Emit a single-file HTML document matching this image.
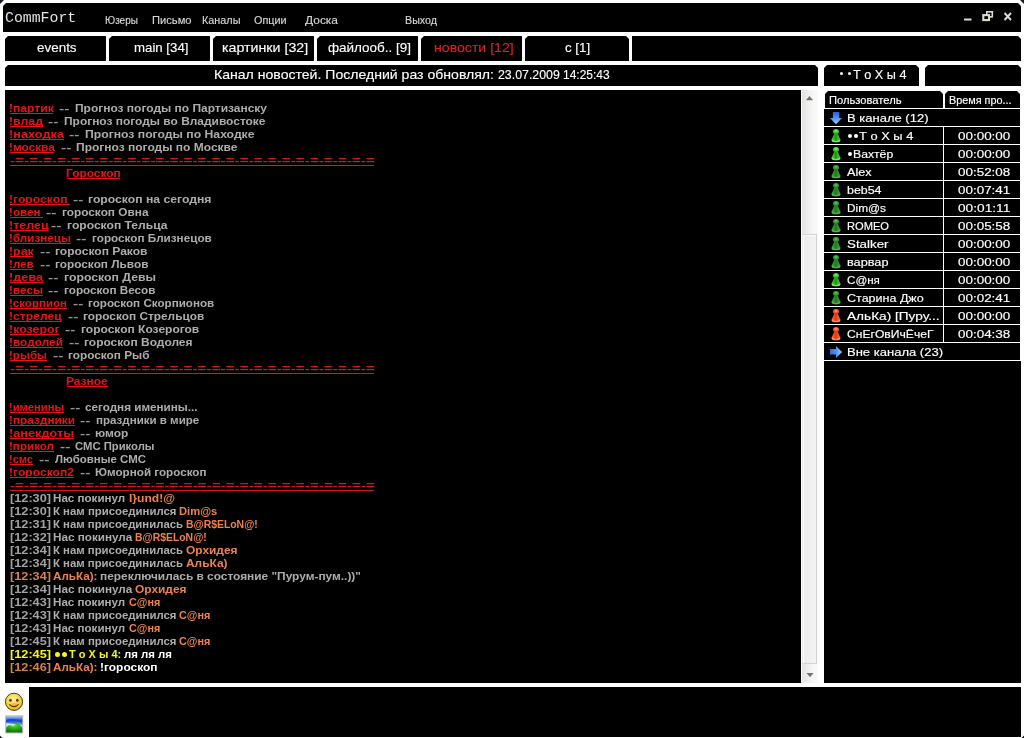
<!DOCTYPE html><html><head><meta charset="utf-8"><title>CommFort</title><style>

html,body{margin:0;padding:0;background:#fff;}
body{width:1024px;height:738px;position:relative;overflow:hidden;font-family:'Liberation Sans',sans-serif;}
.p{position:absolute;background:#000;}
.t{position:absolute;white-space:pre;transform-origin:0 0;line-height:13px;height:13px;}
.c{font-size:11px;font-weight:bold;}
.title{font-family:'Liberation Mono',monospace;font-size:14.5px;line-height:16px;height:16px;}
.menu{font-size:10px;-webkit-text-stroke:0.12px currentColor;}
.tab{position:absolute;top:36px;height:25px;background:#000;color:#fff;font-size:13px;line-height:23px;text-align:center;white-space:pre;padding-left:3px;box-sizing:border-box;}
.u{position:absolute;height:1px;}
.hl{position:absolute;background:#fff;height:1px;left:824px;width:196px;}
.ul{font-size:11px;-webkit-text-stroke:0.15px currentColor;}
.t13{font-size:13px;-webkit-text-stroke:0.12px currentColor;}
svg{position:absolute;overflow:visible;}

</style></head><body>
<svg width="1024" height="738" style="left:0;top:0"><polygon points="0,0 4,0 0,4" fill="#181828"/><polygon points="1020,0 1024,0 1024,4" fill="#181828"/><polygon points="0,735.5 0,738 2.5,738" fill="#181818"/><polygon points="1024,735.5 1024,738 1021.5,738" fill="#181818"/></svg>
<div class="p" style="left:3px;top:3px;width:1018px;height:29px;clip-path:polygon(3px 0,calc(100% - 3px) 0,100% 3px,100% 100%,0 100%,0 3px)"></div>
<div class="tab" style="left:5px;width:101px;color:#ffffff;clip-path:polygon(3px 0,100% 0,100% 100%,0 100%,0 3px)"></div>
<div class="tab" style="left:109px;width:101px;color:#ffffff;clip-path:polygon(3px 0,100% 0,100% 100%,0 100%,0 3px)"></div>
<div class="tab" style="left:213px;width:101px;color:#ffffff;clip-path:polygon(3px 0,100% 0,100% 100%,0 100%,0 3px)"></div>
<div class="tab" style="left:317px;width:101px;color:#ffffff;clip-path:polygon(3px 0,100% 0,100% 100%,0 100%,0 3px)"></div>
<div class="tab" style="left:421px;width:101px;color:#e02020;clip-path:polygon(3px 0,100% 0,100% 100%,0 100%,0 3px)"></div>
<div class="tab" style="left:525px;width:104px;color:#ffffff;clip-path:polygon(3px 0,calc(100% - 3px) 0,100% 3px,100% 100%,0 100%,0 3px)"></div>
<div class="p" style="left:632px;top:36px;width:389px;height:25px;clip-path:polygon(0 0,calc(100% - 3px) 0,100% 3px,100% 100%,0 100%)"></div>
<div class="p" style="left:5px;top:65px;width:813px;height:21px;clip-path:polygon(3px 0,calc(100% - 3px) 0,100% 3px,100% 100%,0 100%,0 3px)"></div>
<div class="p" style="left:824px;top:65px;width:95px;height:21px;clip-path:polygon(3px 0,calc(100% - 3px) 0,100% 3px,100% 100%,0 100%,0 3px)"></div>
<div class="p" style="left:925px;top:65px;width:96px;height:21px;clip-path:polygon(3px 0,calc(100% - 3px) 0,100% 3px,100% 100%,0 100%,0 3px)"></div>
<div class="p" style="left:5px;top:90px;width:796px;height:593px"></div>
<div style="position:absolute;left:802px;top:90px;width:16px;height:593px;background:linear-gradient(90deg,#e3e3e3,#f4f4f4 60%,#fbfbfb)"></div>
<div style="position:absolute;left:802px;top:234px;width:13px;height:428px;background:linear-gradient(90deg,#ececec,#f3f3f3);border:1px solid #d2d2d2;border-left-color:#e8e8e8;box-shadow:inset 1px 1px 0 #fbfbfb"></div>
<svg width="16" height="593" style="left:802px;top:90px"><polygon points="4,10.2 11,10.2 7.5,6" fill="#72725f"/><polygon points="4.5,583 11.5,583 8,587.2" fill="#72725f"/></svg>
<div class="p" style="left:824px;top:109px;width:197px;height:574px"></div>
<div class="p" style="left:825px;top:91px;width:118px;height:17px;clip-path:polygon(3px 0,calc(100% - 3px) 0,100% 3px,100% 100%,0 100%,0 3px)"></div>
<div class="p" style="left:945px;top:91px;width:75px;height:17px;clip-path:polygon(3px 0,calc(100% - 3px) 0,100% 3px,100% 100%,0 100%,0 3px)"></div>
<div style="position:absolute;left:1020px;top:109px;width:1px;height:252px;background:#fff"></div>
<div class="hl" style="top:108px"></div>
<div class="hl" style="top:126px"></div>
<div class="hl" style="top:144px"></div>
<div class="hl" style="top:162px"></div>
<div class="hl" style="top:180px"></div>
<div class="hl" style="top:198px"></div>
<div class="hl" style="top:216px"></div>
<div class="hl" style="top:234px"></div>
<div class="hl" style="top:252px"></div>
<div class="hl" style="top:270px"></div>
<div class="hl" style="top:288px"></div>
<div class="hl" style="top:306px"></div>
<div class="hl" style="top:324px"></div>
<div class="hl" style="top:342px"></div>
<div class="hl" style="top:360px"></div>
<div style="position:absolute;left:943px;top:127px;width:1px;height:216px;background:#fff"></div>
<div class="p" style="left:29px;top:687px;width:992px;height:50px"></div>
<div id="txt" style="position:absolute;left:0;top:0;width:1024px;height:738px;will-change:transform">
<div class="t c" style="left:9.00px;top:102px;color:#e81414;transform:scaleX(1.1007)">!партик</div>
<div class="u" style="left:9.5px;top:113px;width:43.75px;background:#e81414"></div>
<div class="t c" style="left:59.00px;top:102px;color:#969696;transform:scaleX(1.4055)">--</div>
<div class="t c" style="left:75.25px;top:102px;color:#adadad;transform:scaleX(1.0880)">Прогноз погоды по Партизанску</div>
<div class="t c" style="left:9.00px;top:115px;color:#e81414;transform:scaleX(1.1193)">!влад</div>
<div class="u" style="left:9.5px;top:126px;width:33.0px;background:#e81414"></div>
<div class="t c" style="left:48.25px;top:115px;color:#969696;transform:scaleX(1.4055)">--</div>
<div class="t c" style="left:64.00px;top:115px;color:#adadad;transform:scaleX(1.0859)">Прогноз погоды во Владивостоке</div>
<div class="t c" style="left:9.00px;top:128px;color:#e81414;transform:scaleX(1.1590)">!находка</div>
<div class="u" style="left:9.5px;top:139px;width:54.0px;background:#e81414"></div>
<div class="t c" style="left:69.00px;top:128px;color:#969696;transform:scaleX(1.4055)">--</div>
<div class="t c" style="left:85.25px;top:128px;color:#adadad;transform:scaleX(1.1080)">Прогноз погоды по Находке</div>
<div class="t c" style="left:9.00px;top:141px;color:#e81414;transform:scaleX(1.0741)">!москва</div>
<div class="u" style="left:9.5px;top:152px;width:44.75px;background:#e81414"></div>
<div class="t c" style="left:60.75px;top:141px;color:#969696;transform:scaleX(1.4055)">--</div>
<div class="t c" style="left:76.00px;top:141px;color:#adadad;transform:scaleX(1.0912)">Прогноз погоды по Москве</div>
<div class="t c" style="left:9.50px;top:154px;color:#d01a1a;transform:scaleX(1.3917)">-=-=-=-=-=-=-=-=-=-=-=-=-=-=-=-=-=-=-=-=-=-=-=-=-=-=</div>
<div class="u" style="left:10px;top:165px;width:364px;background:#d01a1a"></div>
<div class="t c" style="left:66.00px;top:167px;color:#e81414;transform:scaleX(1.0832)">Гороскоп</div>
<div class="u" style="left:66.5px;top:178px;width:53.75px;background:#e81414"></div>
<div class="t c" style="left:9.00px;top:193px;color:#e81414;transform:scaleX(1.1044)">!гороскоп</div>
<div class="u" style="left:9.5px;top:204px;width:60.25px;background:#e81414"></div>
<div class="t c" style="left:72.75px;top:193px;color:#969696;transform:scaleX(1.4055)">--</div>
<div class="t c" style="left:88.25px;top:193px;color:#adadad;transform:scaleX(1.1079)">гороскоп на сегодня</div>
<div class="t c" style="left:9.00px;top:206px;color:#e81414;transform:scaleX(1.0583)">!овен</div>
<div class="u" style="left:9.5px;top:217px;width:33.5px;background:#e81414"></div>
<div class="t c" style="left:46.25px;top:206px;color:#969696;transform:scaleX(1.4055)">--</div>
<div class="t c" style="left:62.00px;top:206px;color:#adadad;transform:scaleX(1.0754)">гороскоп Овна</div>
<div class="t c" style="left:9.00px;top:219px;color:#e81414;transform:scaleX(1.1393)">!телец</div>
<div class="u" style="left:9.5px;top:230px;width:38.75px;background:#e81414"></div>
<div class="t c" style="left:50.75px;top:219px;color:#969696;transform:scaleX(1.4055)">--</div>
<div class="t c" style="left:67.00px;top:219px;color:#adadad;transform:scaleX(1.0995)">гороскоп Тельца</div>
<div class="t c" style="left:9.00px;top:232px;color:#e81414;transform:scaleX(1.0630)">!близнецы</div>
<div class="u" style="left:9.5px;top:243px;width:61.0px;background:#e81414"></div>
<div class="t c" style="left:76.25px;top:232px;color:#969696;transform:scaleX(1.4055)">--</div>
<div class="t c" style="left:92.00px;top:232px;color:#adadad;transform:scaleX(1.0646)">гороскоп Близнецов</div>
<div class="t c" style="left:9.00px;top:245px;color:#e81414;transform:scaleX(1.1242)">!рак</div>
<div class="u" style="left:9.5px;top:256px;width:23.75px;background:#e81414"></div>
<div class="t c" style="left:39.50px;top:245px;color:#969696;transform:scaleX(1.4055)">--</div>
<div class="t c" style="left:55.00px;top:245px;color:#adadad;transform:scaleX(1.0947)">гороскоп Раков</div>
<div class="t c" style="left:9.00px;top:258px;color:#e81414;transform:scaleX(1.0581)">!лев</div>
<div class="u" style="left:9.5px;top:269px;width:23.75px;background:#e81414"></div>
<div class="t c" style="left:39.50px;top:258px;color:#969696;transform:scaleX(1.4055)">--</div>
<div class="t c" style="left:55.00px;top:258px;color:#adadad;transform:scaleX(1.0755)">гороскоп Львов</div>
<div class="t c" style="left:9.00px;top:271px;color:#e81414;transform:scaleX(1.1525)">!дева</div>
<div class="u" style="left:9.5px;top:282px;width:33.0px;background:#e81414"></div>
<div class="t c" style="left:48.25px;top:271px;color:#969696;transform:scaleX(1.4055)">--</div>
<div class="t c" style="left:64.00px;top:271px;color:#adadad;transform:scaleX(1.1139)">гороскоп Девы</div>
<div class="t c" style="left:9.00px;top:284px;color:#e81414;transform:scaleX(1.0703)">!весы</div>
<div class="u" style="left:9.5px;top:295px;width:33.0px;background:#e81414"></div>
<div class="t c" style="left:48.25px;top:284px;color:#969696;transform:scaleX(1.4055)">--</div>
<div class="t c" style="left:64.00px;top:284px;color:#adadad;transform:scaleX(1.0655)">гороскоп Весов</div>
<div class="t c" style="left:9.00px;top:297px;color:#e81414;transform:scaleX(1.0477)">!скорпион</div>
<div class="u" style="left:9.5px;top:308px;width:57.0px;background:#e81414"></div>
<div class="t c" style="left:72.50px;top:297px;color:#969696;transform:scaleX(1.4055)">--</div>
<div class="t c" style="left:88.25px;top:297px;color:#adadad;transform:scaleX(1.0579)">гороскоп Скорпионов</div>
<div class="t c" style="left:9.00px;top:310px;color:#e81414;transform:scaleX(1.1051)">!стрелец</div>
<div class="u" style="left:9.5px;top:321px;width:51.75px;background:#e81414"></div>
<div class="t c" style="left:67.50px;top:310px;color:#969696;transform:scaleX(1.4055)">--</div>
<div class="t c" style="left:83.25px;top:310px;color:#adadad;transform:scaleX(1.0776)">гороскоп Стрельцов</div>
<div class="t c" style="left:9.00px;top:323px;color:#e81414;transform:scaleX(1.1262)">!козерог</div>
<div class="u" style="left:9.5px;top:334px;width:49.75px;background:#e81414"></div>
<div class="t c" style="left:65.25px;top:323px;color:#969696;transform:scaleX(1.4055)">--</div>
<div class="t c" style="left:81.25px;top:323px;color:#adadad;transform:scaleX(1.0905)">гороскоп Козерогов</div>
<div class="t c" style="left:9.00px;top:336px;color:#e81414;transform:scaleX(1.0797)">!водолей</div>
<div class="u" style="left:9.5px;top:347px;width:53.0px;background:#e81414"></div>
<div class="t c" style="left:68.50px;top:336px;color:#969696;transform:scaleX(1.4055)">--</div>
<div class="t c" style="left:84.25px;top:336px;color:#adadad;transform:scaleX(1.0886)">гороскоп Водолея</div>
<div class="t c" style="left:9.00px;top:349px;color:#e81414;transform:scaleX(1.0565)">!рыбы</div>
<div class="u" style="left:9.5px;top:360px;width:37.0px;background:#e81414"></div>
<div class="t c" style="left:52.50px;top:349px;color:#969696;transform:scaleX(1.4055)">--</div>
<div class="t c" style="left:68.25px;top:349px;color:#adadad;transform:scaleX(1.0741)">гороскоп Рыб</div>
<div class="t c" style="left:9.50px;top:362px;color:#d01a1a;transform:scaleX(1.3917)">-=-=-=-=-=-=-=-=-=-=-=-=-=-=-=-=-=-=-=-=-=-=-=-=-=-=</div>
<div class="u" style="left:10px;top:373px;width:364px;background:#d01a1a"></div>
<div class="t c" style="left:66.25px;top:375px;color:#e81414;transform:scaleX(1.0871)">Разное</div>
<div class="u" style="left:66.75px;top:386px;width:40.75px;background:#e81414"></div>
<div class="t c" style="left:9.00px;top:401px;color:#e81414;transform:scaleX(1.0162)">!именины</div>
<div class="u" style="left:9.5px;top:412px;width:54.0px;background:#e81414"></div>
<div class="t c" style="left:69.50px;top:401px;color:#969696;transform:scaleX(1.4055)">--</div>
<div class="t c" style="left:85.25px;top:401px;color:#adadad;transform:scaleX(1.0615)">сегодня именины...</div>
<div class="t c" style="left:9.00px;top:414px;color:#e81414;transform:scaleX(1.0748)">!праздники</div>
<div class="u" style="left:9.5px;top:425px;width:65.0px;background:#e81414"></div>
<div class="t c" style="left:80.25px;top:414px;color:#969696;transform:scaleX(1.4055)">--</div>
<div class="t c" style="left:96.25px;top:414px;color:#adadad;transform:scaleX(1.0497)">праздники в мире</div>
<div class="t c" style="left:9.00px;top:427px;color:#e81414;transform:scaleX(1.1552)">!анекдоты</div>
<div class="u" style="left:9.5px;top:438px;width:64.0px;background:#e81414"></div>
<div class="t c" style="left:79.50px;top:427px;color:#969696;transform:scaleX(1.4055)">--</div>
<div class="t c" style="left:95.25px;top:427px;color:#adadad;transform:scaleX(1.0835)">юмор</div>
<div class="t c" style="left:9.00px;top:440px;color:#e81414;transform:scaleX(1.0565)">!прикол</div>
<div class="u" style="left:9.5px;top:451px;width:44.0px;background:#e81414"></div>
<div class="t c" style="left:59.50px;top:440px;color:#969696;transform:scaleX(1.4055)">--</div>
<div class="t c" style="left:75.25px;top:440px;color:#adadad;transform:scaleX(1.0252)">СМС Приколы</div>
<div class="t c" style="left:9.00px;top:453px;color:#e81414;transform:scaleX(1.0046)">!смс</div>
<div class="u" style="left:9.5px;top:464px;width:23.0px;background:#e81414"></div>
<div class="t c" style="left:38.75px;top:453px;color:#969696;transform:scaleX(1.4055)">--</div>
<div class="t c" style="left:54.50px;top:453px;color:#adadad;transform:scaleX(1.0415)">Любовные СМС</div>
<div class="t c" style="left:9.00px;top:466px;color:#e81414;transform:scaleX(1.1002)">!гороскоп2</div>
<div class="u" style="left:9.5px;top:477px;width:64.0px;background:#e81414"></div>
<div class="t c" style="left:79.50px;top:466px;color:#969696;transform:scaleX(1.4055)">--</div>
<div class="t c" style="left:95.25px;top:466px;color:#adadad;transform:scaleX(1.0594)">Юморной гороскоп</div>
<div class="t c" style="left:9.50px;top:479px;color:#d01a1a;transform:scaleX(1.3917)">-=-=-=-=-=-=-=-=-=-=-=-=-=-=-=-=-=-=-=-=-=-=-=-=-=-=</div>
<div class="u" style="left:10px;top:490px;width:364px;background:#d01a1a"></div>
<div class="t c" style="left:9.50px;top:492px;color:#a2a2a2;transform:scaleX(1.1559)">[12:30]</div>
<div class="t c" style="left:53.25px;top:492px;color:#adadad;transform:scaleX(1.0550)">Нас покинул</div>
<div class="t c" style="left:128.50px;top:492px;color:#ee824e;transform:scaleX(1.0981)">I}und!@</div>
<div class="t c" style="left:9.50px;top:505px;color:#a2a2a2;transform:scaleX(1.1559)">[12:30]</div>
<div class="t c" style="left:53.25px;top:505px;color:#adadad;transform:scaleX(1.0348)">К нам присоединился</div>
<div class="t c" style="left:179.25px;top:505px;color:#ee824e;transform:scaleX(1.0166)">Dim@s</div>
<div class="t c" style="left:9.50px;top:518px;color:#a2a2a2;transform:scaleX(1.1559)">[12:31]</div>
<div class="t c" style="left:53.25px;top:518px;color:#adadad;transform:scaleX(1.0321)">К нам присоединилась</div>
<div class="t c" style="left:186.00px;top:518px;color:#ee824e;transform:scaleX(0.9460)">B@R$ELoN@!</div>
<div class="t c" style="left:9.50px;top:531px;color:#a2a2a2;transform:scaleX(1.1559)">[12:32]</div>
<div class="t c" style="left:53.25px;top:531px;color:#adadad;transform:scaleX(1.0624)">Нас покинула</div>
<div class="t c" style="left:135.25px;top:531px;color:#ee824e;transform:scaleX(0.9460)">B@R$ELoN@!</div>
<div class="t c" style="left:9.50px;top:544px;color:#a2a2a2;transform:scaleX(1.1559)">[12:34]</div>
<div class="t c" style="left:53.25px;top:544px;color:#adadad;transform:scaleX(1.0321)">К нам присоединилась</div>
<div class="t c" style="left:186.00px;top:544px;color:#ee824e;transform:scaleX(1.0835)">Орхидея</div>
<div class="t c" style="left:9.50px;top:557px;color:#a2a2a2;transform:scaleX(1.1559)">[12:34]</div>
<div class="t c" style="left:53.25px;top:557px;color:#adadad;transform:scaleX(1.0321)">К нам присоединилась</div>
<div class="t c" style="left:186.00px;top:557px;color:#ee824e;transform:scaleX(1.0828)">АльКа)</div>
<div class="t c" style="left:9.50px;top:570px;color:#d8804e;transform:scaleX(1.1559)">[12:34]</div>
<div class="t c" style="left:53.25px;top:570px;color:#ee824e;transform:scaleX(1.0595)">АльКа):</div>
<div class="t c" style="left:100.25px;top:570px;color:#adadad;transform:scaleX(1.0797)">переключилась в состояние &quot;Пурум-пум..))&quot;</div>
<div class="t c" style="left:9.50px;top:583px;color:#a2a2a2;transform:scaleX(1.1559)">[12:34]</div>
<div class="t c" style="left:53.25px;top:583px;color:#adadad;transform:scaleX(1.0624)">Нас покинула</div>
<div class="t c" style="left:135.25px;top:583px;color:#ee824e;transform:scaleX(1.0835)">Орхидея</div>
<div class="t c" style="left:9.50px;top:596px;color:#a2a2a2;transform:scaleX(1.1559)">[12:43]</div>
<div class="t c" style="left:53.25px;top:596px;color:#adadad;transform:scaleX(1.0550)">Нас покинул</div>
<div class="t c" style="left:128.50px;top:596px;color:#ee824e;transform:scaleX(0.9847)">С@ня</div>
<div class="t c" style="left:9.50px;top:609px;color:#a2a2a2;transform:scaleX(1.1559)">[12:43]</div>
<div class="t c" style="left:53.25px;top:609px;color:#adadad;transform:scaleX(1.0348)">К нам присоединился</div>
<div class="t c" style="left:179.25px;top:609px;color:#ee824e;transform:scaleX(0.9847)">С@ня</div>
<div class="t c" style="left:9.50px;top:622px;color:#a2a2a2;transform:scaleX(1.1559)">[12:43]</div>
<div class="t c" style="left:53.25px;top:622px;color:#adadad;transform:scaleX(1.0550)">Нас покинул</div>
<div class="t c" style="left:128.50px;top:622px;color:#ee824e;transform:scaleX(0.9847)">С@ня</div>
<div class="t c" style="left:9.50px;top:635px;color:#a2a2a2;transform:scaleX(1.1559)">[12:45]</div>
<div class="t c" style="left:53.25px;top:635px;color:#adadad;transform:scaleX(1.0348)">К нам присоединился</div>
<div class="t c" style="left:179.25px;top:635px;color:#ee824e;transform:scaleX(0.9847)">С@ня</div>
<div class="t c" style="left:9.50px;top:648px;color:#f6f614;transform:scaleX(1.1559)">[12:45]</div>
<div class="t c" style="left:68.50px;top:648px;color:#f6f614;transform:scaleX(1.0012)">Т о Х ы 4:</div>
<div class="t c" style="left:123.75px;top:648px;color:#ffffff;transform:scaleX(1.0357)">ля ля ля</div>
<div class="t c" style="left:9.50px;top:661px;color:#d8804e;transform:scaleX(1.1559)">[12:46]</div>
<div class="t c" style="left:53.25px;top:661px;color:#ee824e;transform:scaleX(1.0595)">АльКа):</div>
<div class="t c" style="left:100.25px;top:661px;color:#ffffff;transform:scaleX(1.0855)">!гороскоп</div>
<div class="t title" style="left:5.40px;top:10px;color:#e4e4e4;transform:scaleX(1.0226)">CommFort</div>
<div class="t menu" style="left:104.75px;top:14px;color:#d8d8d8;transform:scaleX(1.0033)">Юзеры</div>
<div class="t menu" style="left:152.00px;top:14px;color:#d8d8d8;transform:scaleX(1.1151)">Письмо</div>
<div class="t menu" style="left:201.50px;top:14px;color:#d8d8d8;transform:scaleX(1.0845)">Каналы</div>
<div class="t menu" style="left:254.00px;top:14px;color:#d8d8d8;transform:scaleX(1.0800)">Опции</div>
<div class="t menu" style="left:305.00px;top:14px;color:#d8d8d8;transform:scaleX(1.1952)">Доска</div>
<div class="t menu" style="left:404.50px;top:14px;color:#d8d8d8;transform:scaleX(1.0695)">Выход</div>
<div class="t t13" style="left:213.80px;top:68px;color:#ffffff;transform:scaleX(1.0821)">Канал новостей. Последний раз обновлял:</div>
<div class="t t13" style="left:497.50px;top:68px;color:#ffffff;transform:scaleX(0.9496)">23.07.2009</div>
<div class="t t13" style="left:563.00px;top:68px;color:#ffffff;transform:scaleX(0.9208)">14:25:43</div>
<div class="t t13" style="left:853.00px;top:68px;color:#ffffff;transform:scaleX(0.9768)">Т о Х ы 4</div>
<div class="t ul" style="left:829.00px;top:94px;color:#ffffff;transform:scaleX(1.0155)">Пользователь</div>
<div class="t ul" style="left:949.00px;top:94px;color:#ffffff;transform:scaleX(0.9840)">Время про...</div>
<div class="t ul" style="left:847.00px;top:112px;color:#ffffff;transform:scaleX(1.1825)">В канале (12)</div>
<div class="t t13" style="left:37.20px;top:41px;color:#ffffff;transform:scaleX(1.0336)">events</div>
<div class="t t13" style="left:133.65px;top:41px;color:#ffffff;transform:scaleX(1.0181)">main [34]</div>
<div class="t t13" style="left:221.70px;top:41px;color:#ffffff;transform:scaleX(1.0940)">картинки [32]</div>
<div class="t t13" style="left:327.80px;top:41px;color:#ffffff;transform:scaleX(1.0359)">файлооб.. [9]</div>
<div class="t t13" style="left:433.90px;top:41px;color:#e02020;transform:scaleX(1.0855)">новости [12]</div>
<div class="t t13" style="left:564.90px;top:41px;color:#ffffff;transform:scaleX(1.0253)">c [1]</div>
<div class="t ul" style="left:858.70px;top:130px;color:#ffffff;transform:scaleX(1.1693)">Т о Х ы 4</div>
<div class="t ul" style="left:958.00px;top:130px;color:#ffffff;transform:scaleX(1.2212)">00:00:00</div>
<div class="t ul" style="left:853.30px;top:148px;color:#ffffff;transform:scaleX(1.1133)">Вахтёр</div>
<div class="t ul" style="left:958.00px;top:148px;color:#ffffff;transform:scaleX(1.2212)">00:00:00</div>
<div class="t ul" style="left:847.00px;top:166px;color:#ffffff;transform:scaleX(1.1445)">Alex</div>
<div class="t ul" style="left:958.00px;top:166px;color:#ffffff;transform:scaleX(1.2212)">00:52:08</div>
<div class="t ul" style="left:847.00px;top:184px;color:#ffffff;transform:scaleX(1.1277)">beb54</div>
<div class="t ul" style="left:958.00px;top:184px;color:#ffffff;transform:scaleX(1.2212)">00:07:41</div>
<div class="t ul" style="left:847.00px;top:202px;color:#ffffff;transform:scaleX(1.0768)">Dim@s</div>
<div class="t ul" style="left:958.00px;top:202px;color:#ffffff;transform:scaleX(1.2448)">00:01:11</div>
<div class="t ul" style="left:847.00px;top:220px;color:#ffffff;transform:scaleX(1.0105)">ROMEO</div>
<div class="t ul" style="left:958.00px;top:220px;color:#ffffff;transform:scaleX(1.2212)">00:05:58</div>
<div class="t ul" style="left:847.00px;top:238px;color:#ffffff;transform:scaleX(1.2117)">Stalker</div>
<div class="t ul" style="left:958.00px;top:238px;color:#ffffff;transform:scaleX(1.2212)">00:00:00</div>
<div class="t ul" style="left:847.00px;top:256px;color:#ffffff;transform:scaleX(1.1553)">варвар</div>
<div class="t ul" style="left:958.00px;top:256px;color:#ffffff;transform:scaleX(1.2212)">00:00:00</div>
<div class="t ul" style="left:847.00px;top:274px;color:#ffffff;transform:scaleX(1.0560)">С@ня</div>
<div class="t ul" style="left:958.00px;top:274px;color:#ffffff;transform:scaleX(1.2212)">00:00:00</div>
<div class="t ul" style="left:847.00px;top:292px;color:#ffffff;transform:scaleX(1.1376)">Старина Джо</div>
<div class="t ul" style="left:958.00px;top:292px;color:#ffffff;transform:scaleX(1.2212)">00:02:41</div>
<div class="t ul" style="left:847.00px;top:310px;color:#ffffff;transform:scaleX(1.2393)">АльКа) [Пуру...</div>
<div class="t ul" style="left:958.00px;top:310px;color:#ffffff;transform:scaleX(1.2212)">00:00:00</div>
<div class="t ul" style="left:847.00px;top:328px;color:#ffffff;transform:scaleX(1.1010)">СнЕгОвИчЁчеГ</div>
<div class="t ul" style="left:958.00px;top:328px;color:#ffffff;transform:scaleX(1.2212)">00:04:38</div>
<div class="t ul" style="left:847.00px;top:346px;color:#ffffff;transform:scaleX(1.1836)">Вне канала (23)</div>
</div>
<div style="position:absolute;left:54.90px;top:652.10px;width:5px;height:5px;border-radius:50%;background:#f6f614"></div>
<div style="position:absolute;left:62.40px;top:652.10px;width:5px;height:5px;border-radius:50%;background:#f6f614"></div>
<div style="position:absolute;left:840.30px;top:71.90px;width:3.2px;height:3.2px;border-radius:50%;background:#ffffff"></div>
<div style="position:absolute;left:847.50px;top:71.90px;width:3.2px;height:3.2px;border-radius:50%;background:#ffffff"></div>
<div style="position:absolute;left:847.95px;top:134.25px;width:3.9px;height:3.9px;border-radius:50%;background:#ffffff"></div>
<div style="position:absolute;left:854.25px;top:134.25px;width:3.9px;height:3.9px;border-radius:50%;background:#ffffff"></div>
<div style="position:absolute;left:847.95px;top:152.25px;width:3.9px;height:3.9px;border-radius:50%;background:#ffffff"></div>
<!-- window controls -->
<svg width="60" height="16" style="left:960px;top:8px">
<rect x="4" y="10.5" width="7.5" height="2" fill="#dcdcd4"/>
<rect x="26.8" y="3.8" width="5.5" height="5" fill="none" stroke="#dcdcd0" stroke-width="1.6"/>
<rect x="23.3" y="7.1" width="5.7" height="5" fill="#000" stroke="#dcdcd0" stroke-width="2.1"/>
<path d="M44.5 5 L51 12 M51 5 L44.5 12" stroke="#dcdcd4" stroke-width="1.9" fill="none"/>
</svg>
<svg width="0" height="0" style="left:0;top:0"><defs>
<radialGradient id="gh" cx="0.5" cy="0.35" r="0.7"><stop offset="0" stop-color="#7af56a"/><stop offset="0.6" stop-color="#2fc41f"/><stop offset="1" stop-color="#1c8a12"/></radialGradient>
<linearGradient id="gb" x1="0" x2="1" y1="0" y2="0"><stop offset="0" stop-color="#58e048"/><stop offset="0.45" stop-color="#1f9412"/><stop offset="1" stop-color="#4ad83a"/></linearGradient>
<radialGradient id="dh" cx="0.5" cy="0.35" r="0.7"><stop offset="0" stop-color="#5cc052"/><stop offset="0.6" stop-color="#2a962a"/><stop offset="1" stop-color="#1a6a1a"/></radialGradient>
<linearGradient id="db" x1="0" x2="1" y1="0" y2="0"><stop offset="0" stop-color="#48b048"/><stop offset="0.45" stop-color="#1e7a1e"/><stop offset="1" stop-color="#3ea83e"/></linearGradient>
<radialGradient id="rh" cx="0.5" cy="0.35" r="0.7"><stop offset="0" stop-color="#ff9a70"/><stop offset="0.6" stop-color="#f4481e"/><stop offset="1" stop-color="#c02a10"/></radialGradient>
<linearGradient id="rb" x1="0" x2="1" y1="0" y2="0"><stop offset="0" stop-color="#ff7a50"/><stop offset="0.45" stop-color="#e8380e"/><stop offset="1" stop-color="#ff6a40"/></linearGradient>
<linearGradient id="ba" x1="0" x2="0" y1="0" y2="1"><stop offset="0" stop-color="#2c62d0"/><stop offset="0.5" stop-color="#4a94f4"/><stop offset="1" stop-color="#a4d4ff"/></linearGradient>
<linearGradient id="bb" x1="0" x2="1" y1="0" y2="0"><stop offset="0" stop-color="#3470e0"/><stop offset="0.5" stop-color="#4a90f0"/><stop offset="1" stop-color="#a8d8ff"/></linearGradient>
</defs></svg>
<svg width="12" height="16" viewBox="0 0 12 16" style="left:830px;top:127px">
<path d="M4.1 7 L7.9 7 L10.5 13 Q10.6 15.3 6 15.3 Q1.4 15.3 1.5 13 Z" fill="url(#gb)"/>
<path d="M1.7 12.6 Q6 15.4 10.3 12.6 Q10.6 15.3 6 15.3 Q1.4 15.3 1.7 12.6Z" fill="#8cff78" opacity="0.75"/>
<ellipse cx="6" cy="4.6" rx="3.05" ry="2.7" fill="url(#gh)"/>
</svg>
<svg width="12" height="16" viewBox="0 0 12 16" style="left:830px;top:145px">
<path d="M4.1 7 L7.9 7 L10.5 13 Q10.6 15.3 6 15.3 Q1.4 15.3 1.5 13 Z" fill="url(#gb)"/>
<path d="M1.7 12.6 Q6 15.4 10.3 12.6 Q10.6 15.3 6 15.3 Q1.4 15.3 1.7 12.6Z" fill="#8cff78" opacity="0.75"/>
<ellipse cx="6" cy="4.6" rx="3.05" ry="2.7" fill="url(#gh)"/>
</svg>
<svg width="12" height="16" viewBox="0 0 12 16" style="left:830px;top:163px">
<path d="M4.1 7 L7.9 7 L10.5 13 Q10.6 15.3 6 15.3 Q1.4 15.3 1.5 13 Z" fill="url(#db)"/>
<path d="M1.7 12.6 Q6 15.4 10.3 12.6 Q10.6 15.3 6 15.3 Q1.4 15.3 1.7 12.6Z" fill="#58c058" opacity="0.75"/>
<ellipse cx="6" cy="4.6" rx="3.05" ry="2.7" fill="url(#dh)"/>
</svg>
<svg width="12" height="16" viewBox="0 0 12 16" style="left:830px;top:181px">
<path d="M4.1 7 L7.9 7 L10.5 13 Q10.6 15.3 6 15.3 Q1.4 15.3 1.5 13 Z" fill="url(#db)"/>
<path d="M1.7 12.6 Q6 15.4 10.3 12.6 Q10.6 15.3 6 15.3 Q1.4 15.3 1.7 12.6Z" fill="#58c058" opacity="0.75"/>
<ellipse cx="6" cy="4.6" rx="3.05" ry="2.7" fill="url(#dh)"/>
</svg>
<svg width="12" height="16" viewBox="0 0 12 16" style="left:830px;top:199px">
<path d="M4.1 7 L7.9 7 L10.5 13 Q10.6 15.3 6 15.3 Q1.4 15.3 1.5 13 Z" fill="url(#db)"/>
<path d="M1.7 12.6 Q6 15.4 10.3 12.6 Q10.6 15.3 6 15.3 Q1.4 15.3 1.7 12.6Z" fill="#58c058" opacity="0.75"/>
<ellipse cx="6" cy="4.6" rx="3.05" ry="2.7" fill="url(#dh)"/>
</svg>
<svg width="12" height="16" viewBox="0 0 12 16" style="left:830px;top:217px">
<path d="M4.1 7 L7.9 7 L10.5 13 Q10.6 15.3 6 15.3 Q1.4 15.3 1.5 13 Z" fill="url(#db)"/>
<path d="M1.7 12.6 Q6 15.4 10.3 12.6 Q10.6 15.3 6 15.3 Q1.4 15.3 1.7 12.6Z" fill="#58c058" opacity="0.75"/>
<ellipse cx="6" cy="4.6" rx="3.05" ry="2.7" fill="url(#dh)"/>
</svg>
<svg width="12" height="16" viewBox="0 0 12 16" style="left:830px;top:235px">
<path d="M4.1 7 L7.9 7 L10.5 13 Q10.6 15.3 6 15.3 Q1.4 15.3 1.5 13 Z" fill="url(#db)"/>
<path d="M1.7 12.6 Q6 15.4 10.3 12.6 Q10.6 15.3 6 15.3 Q1.4 15.3 1.7 12.6Z" fill="#58c058" opacity="0.75"/>
<ellipse cx="6" cy="4.6" rx="3.05" ry="2.7" fill="url(#dh)"/>
</svg>
<svg width="12" height="16" viewBox="0 0 12 16" style="left:830px;top:253px">
<path d="M4.1 7 L7.9 7 L10.5 13 Q10.6 15.3 6 15.3 Q1.4 15.3 1.5 13 Z" fill="url(#db)"/>
<path d="M1.7 12.6 Q6 15.4 10.3 12.6 Q10.6 15.3 6 15.3 Q1.4 15.3 1.7 12.6Z" fill="#58c058" opacity="0.75"/>
<ellipse cx="6" cy="4.6" rx="3.05" ry="2.7" fill="url(#dh)"/>
</svg>
<svg width="12" height="16" viewBox="0 0 12 16" style="left:830px;top:271px">
<path d="M4.1 7 L7.9 7 L10.5 13 Q10.6 15.3 6 15.3 Q1.4 15.3 1.5 13 Z" fill="url(#gb)"/>
<path d="M1.7 12.6 Q6 15.4 10.3 12.6 Q10.6 15.3 6 15.3 Q1.4 15.3 1.7 12.6Z" fill="#8cff78" opacity="0.75"/>
<ellipse cx="6" cy="4.6" rx="3.05" ry="2.7" fill="url(#gh)"/>
</svg>
<svg width="12" height="16" viewBox="0 0 12 16" style="left:830px;top:289px">
<path d="M4.1 7 L7.9 7 L10.5 13 Q10.6 15.3 6 15.3 Q1.4 15.3 1.5 13 Z" fill="url(#db)"/>
<path d="M1.7 12.6 Q6 15.4 10.3 12.6 Q10.6 15.3 6 15.3 Q1.4 15.3 1.7 12.6Z" fill="#58c058" opacity="0.75"/>
<ellipse cx="6" cy="4.6" rx="3.05" ry="2.7" fill="url(#dh)"/>
</svg>
<svg width="12" height="16" viewBox="0 0 12 16" style="left:830px;top:307px">
<path d="M4.1 7 L7.9 7 L10.5 13 Q10.6 15.3 6 15.3 Q1.4 15.3 1.5 13 Z" fill="url(#rb)"/>
<path d="M1.7 12.6 Q6 15.4 10.3 12.6 Q10.6 15.3 6 15.3 Q1.4 15.3 1.7 12.6Z" fill="#ffa080" opacity="0.75"/>
<ellipse cx="6" cy="4.6" rx="3.05" ry="2.7" fill="url(#rh)"/>
</svg>
<svg width="12" height="16" viewBox="0 0 12 16" style="left:830px;top:325px">
<path d="M4.1 7 L7.9 7 L10.5 13 Q10.6 15.3 6 15.3 Q1.4 15.3 1.5 13 Z" fill="url(#rb)"/>
<path d="M1.7 12.6 Q6 15.4 10.3 12.6 Q10.6 15.3 6 15.3 Q1.4 15.3 1.7 12.6Z" fill="#ffa080" opacity="0.75"/>
<ellipse cx="6" cy="4.6" rx="3.05" ry="2.7" fill="url(#rh)"/>
</svg>
<svg width="14" height="14" viewBox="0 0 14 14" style="left:829px;top:111px"><path d="M3.9 1.1 L10.3 1.1 L10.3 7 L13 7 L7 13.3 L1 7 L3.9 7 Z" fill="url(#ba)"/></svg>
<svg width="14" height="14" viewBox="0 0 14 14" style="left:829px;top:345px"><path d="M1 4 L7 4 L7 1 L13 7 L7 13 L7 9.6 L1 9.6 Z" fill="url(#bb)"/></svg>
<svg width="20" height="20" viewBox="0 0 20 20" style="left:4px;top:692px">
<defs><radialGradient id="sm" cx="0.45" cy="0.35" r="0.75"><stop offset="0" stop-color="#fff0a0"/><stop offset="0.55" stop-color="#f2d23a"/><stop offset="1" stop-color="#d8a418"/></radialGradient></defs>
<circle cx="10" cy="9.8" r="8.6" fill="url(#sm)" stroke="#3a3010" stroke-width="0.9"/>
<ellipse cx="6.5" cy="8.2" rx="1.3" ry="1.5" fill="#5a3a10"/><ellipse cx="13.3" cy="8.2" rx="1.3" ry="1.5" fill="#5a3a10"/>
<path d="M5.6 12.6 Q10 16.6 14.2 12.6" fill="none" stroke="#4a2a08" stroke-width="1.1" stroke-linecap="round"/>
<ellipse cx="10" cy="12.6" rx="3.4" ry="1.6" fill="#f0a020" opacity="0.55"/>
</svg>
<svg width="20" height="20" viewBox="0 0 20 20" style="left:4px;top:714px">
<defs><linearGradient id="sky" x1="0" x2="0" y1="0" y2="1"><stop offset="0" stop-color="#9cc8f4"/><stop offset="0.25" stop-color="#1c4cc8"/><stop offset="0.5" stop-color="#5aa0e8"/><stop offset="0.75" stop-color="#cfe4f4"/></linearGradient>
<radialGradient id="hill" cx="0.5" cy="0.2" r="0.9"><stop offset="0" stop-color="#5ae028"/><stop offset="0.6" stop-color="#1c9410"/><stop offset="1" stop-color="#0c6008"/></radialGradient></defs>
<rect x="1.2" y="1.4" width="18" height="18" fill="#b4b4b8"/>
<rect x="2.2" y="2.4" width="16" height="16" fill="url(#sky)"/>
<path d="M2.2 8 Q8 5.5 18.2 8.4 L18.2 6.4 Q9 3.6 2.2 6 Z" fill="#1a48c4"/>
<path d="M2.2 9 L18.2 11 L18.2 18.4 L2.2 18.4Z" fill="#cfe0ee"/>
<path d="M2.2 18.4 L2.2 13.5 Q5.5 9.5 9 12.5 Q12.5 8 16 11 Q18 12.6 18.2 14 L18.2 18.4 Z" fill="url(#hill)"/>
</svg>
</body></html>
